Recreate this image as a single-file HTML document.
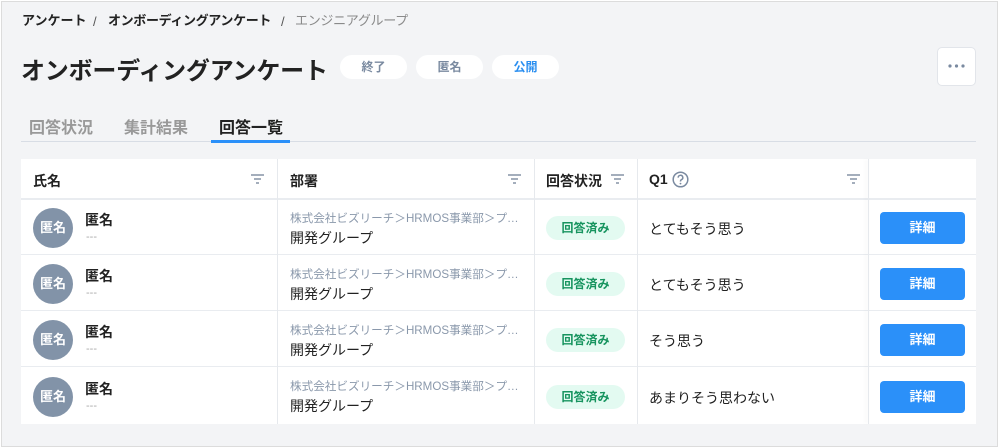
<!DOCTYPE html>
<html><head><meta charset="utf-8"><style>
*{box-sizing:border-box;margin:0;padding:0}
body{width:1000px;height:448px;background:#fff;font-family:"Liberation Sans","Noto Sans CJK JP",sans-serif;position:relative;overflow:hidden;color:#222}
.frame{position:absolute;left:1px;top:1px;width:997px;height:446px;background:#f3f4f6;border:1px solid #dcdcdc}
.a{position:absolute;white-space:nowrap}
.bc{top:12px;font-size:13px;font-weight:bold;color:#222;line-height:18px}
.sl{top:12px;font-size:13px;color:#555;line-height:20px}
.badge{position:absolute;top:55px;height:24px;background:#fff;border-radius:12px;font-size:12px;font-weight:bold;color:#7a8aa0;text-align:center;line-height:24px}
.tab{top:114px;font-size:16px;font-weight:bold;color:#999}
.tbl{position:absolute;left:21px;top:159px;width:955px;height:265px;background:#fff}
.hl{position:absolute;left:21px;width:955px;height:2px;background:#e9ecf0}
.vl{position:absolute;width:1px;top:159px;height:265px;background:#e6e9ed}
.th{position:absolute;top:171px;font-size:14px;font-weight:bold}
.av{position:absolute;left:33px;width:40px;height:40px;border-radius:20px;background:#8293a8;color:#fff;font-size:13px;font-weight:bold;text-align:center;line-height:40px}
.nm{position:absolute;left:85px;font-size:14px;font-weight:bold}
.dash{position:absolute;left:86px;font-size:11px;color:#aaa}
.dp{position:absolute;left:290px;font-size:11.6px;color:#8a98ab}
.dg{position:absolute;left:290px;font-size:14px}
.ok{position:absolute;left:546px;width:79px;height:24px;border-radius:12px;background:#e3faf1;color:#17945f;font-size:12px;font-weight:bold;text-align:center;line-height:24px}
.q{position:absolute;left:649px;font-size:14px}
.btn{position:absolute;left:880px;width:85px;height:32px;border-radius:4px;background:#2b90f9;color:#fff;font-size:13px;font-weight:bold;text-align:center;line-height:32px}
.flt{position:absolute;top:174px}
</style></head><body>
<div class="frame"></div>
<div class="a bc" style="left:22px">アンケート</div>
<div class="a sl" style="left:93px">/</div>
<div class="a bc" style="left:108px;letter-spacing:-0.35px">オンボーディングアンケート</div>
<div class="a sl" style="left:281px">/</div>
<div class="a bc" style="left:295px;font-weight:normal;color:#8a8a8a;letter-spacing:-0.3px">エンジニアグループ</div>
<div class="a" style="left:21px;top:51px;font-size:24px;font-weight:bold;letter-spacing:-0.2px">オンボーディングアンケート</div>
<div class="badge" style="left:340px;width:67px">終了</div>
<div class="badge" style="left:416px;width:67px">匿名</div>
<div class="badge" style="left:492px;width:67px;color:#2b8ff0">公開</div>
<div class="a" style="left:937px;top:47px;width:39px;height:39px;background:#fff;border:1px solid #e2e5ea;border-radius:5px"></div>
<svg class="a" style="left:948px;top:64px" width="17" height="4"><circle cx="2" cy="2" r="1.6" fill="#7a8aa0"/><circle cx="8.5" cy="2" r="1.6" fill="#7a8aa0"/><circle cx="15" cy="2" r="1.6" fill="#7a8aa0"/></svg>
<div class="a tab" style="left:29px">回答状況</div>
<div class="a tab" style="left:124px">集計結果</div>
<div class="a tab" style="left:219px;color:#222">回答一覧</div>
<div class="a" style="left:21px;top:141px;width:955px;height:1px;background:#d8dde5"></div>
<div class="a" style="left:211px;top:140px;width:79px;height:3px;background:#2b90f9"></div>
<div class="tbl"></div>
<div class="hl" style="top:198px"></div>
<div class="hl" style="top:254px;height:1px"></div>
<div class="hl" style="top:310px;height:1px"></div>
<div class="hl" style="top:366px;height:1px"></div>
<div class="vl" style="left:277px"></div>
<div class="vl" style="left:534px"></div>
<div class="vl" style="left:637px"></div>
<div class="vl" style="left:868px;box-shadow:-2px 0 4px rgba(0,0,0,0.08)"></div>
<div class="th" style="left:33px">氏名</div>
<div class="th" style="left:290px">部署</div>
<div class="th" style="left:546px">回答状況</div>
<div class="th" style="left:649px">Q1</div>
<svg class="a" style="left:672px;top:171px" width="17" height="17" viewBox="0 0 17 17"><circle cx="8.5" cy="8.5" r="7.3" fill="none" stroke="#7a8aa0" stroke-width="1.5"/><path d="M6.2 6.6a2.3 2.3 0 1 1 3.2 2.1c-.6.3-.9.7-.9 1.3v.5" fill="none" stroke="#7a8aa0" stroke-width="1.5"/><circle cx="8.5" cy="12.6" r=".9" fill="#7a8aa0"/></svg>
<svg class="flt" style="left:251px" width="13" height="11"><path d="M0 1h13M3 5h7M5 9h3" stroke="#8593a6" stroke-width="1.6"/></svg>
<svg class="flt" style="left:508px" width="13" height="11"><path d="M0 1h13M3 5h7M5 9h3" stroke="#8593a6" stroke-width="1.6"/></svg>
<svg class="flt" style="left:611px" width="13" height="11"><path d="M0 1h13M3 5h7M5 9h3" stroke="#8593a6" stroke-width="1.6"/></svg>
<svg class="flt" style="left:847px" width="13" height="11"><path d="M0 1h13M3 5h7M5 9h3" stroke="#8593a6" stroke-width="1.6"/></svg>

<div class="av" style="top:208px">匿名</div><div class="nm" style="top:210px">匿名</div><div class="dash" style="top:231px">---</div>
<div class="dp" style="top:210px">株式会社ビズリーチ＞HRMOS事業部＞プ…</div><div class="dg" style="top:228px">開発グループ</div>
<div class="ok" style="top:216px">回答済み</div><div class="q" style="top:219px">とてもそう思う</div><div class="btn" style="top:212px">詳細</div>

<div class="av" style="top:264px">匿名</div><div class="nm" style="top:266px">匿名</div><div class="dash" style="top:287px">---</div>
<div class="dp" style="top:266px">株式会社ビズリーチ＞HRMOS事業部＞プ…</div><div class="dg" style="top:284px">開発グループ</div>
<div class="ok" style="top:272px">回答済み</div><div class="q" style="top:275px">とてもそう思う</div><div class="btn" style="top:268px">詳細</div>

<div class="av" style="top:320px">匿名</div><div class="nm" style="top:322px">匿名</div><div class="dash" style="top:343px">---</div>
<div class="dp" style="top:322px">株式会社ビズリーチ＞HRMOS事業部＞プ…</div><div class="dg" style="top:340px">開発グループ</div>
<div class="ok" style="top:328px">回答済み</div><div class="q" style="top:331px">そう思う</div><div class="btn" style="top:324px">詳細</div>

<div class="av" style="top:377px">匿名</div><div class="nm" style="top:379px">匿名</div><div class="dash" style="top:400px">---</div>
<div class="dp" style="top:378px">株式会社ビズリーチ＞HRMOS事業部＞プ…</div><div class="dg" style="top:396px">開発グループ</div>
<div class="ok" style="top:385px">回答済み</div><div class="q" style="top:388px">あまりそう思わない</div><div class="btn" style="top:381px">詳細</div>
</body></html>
